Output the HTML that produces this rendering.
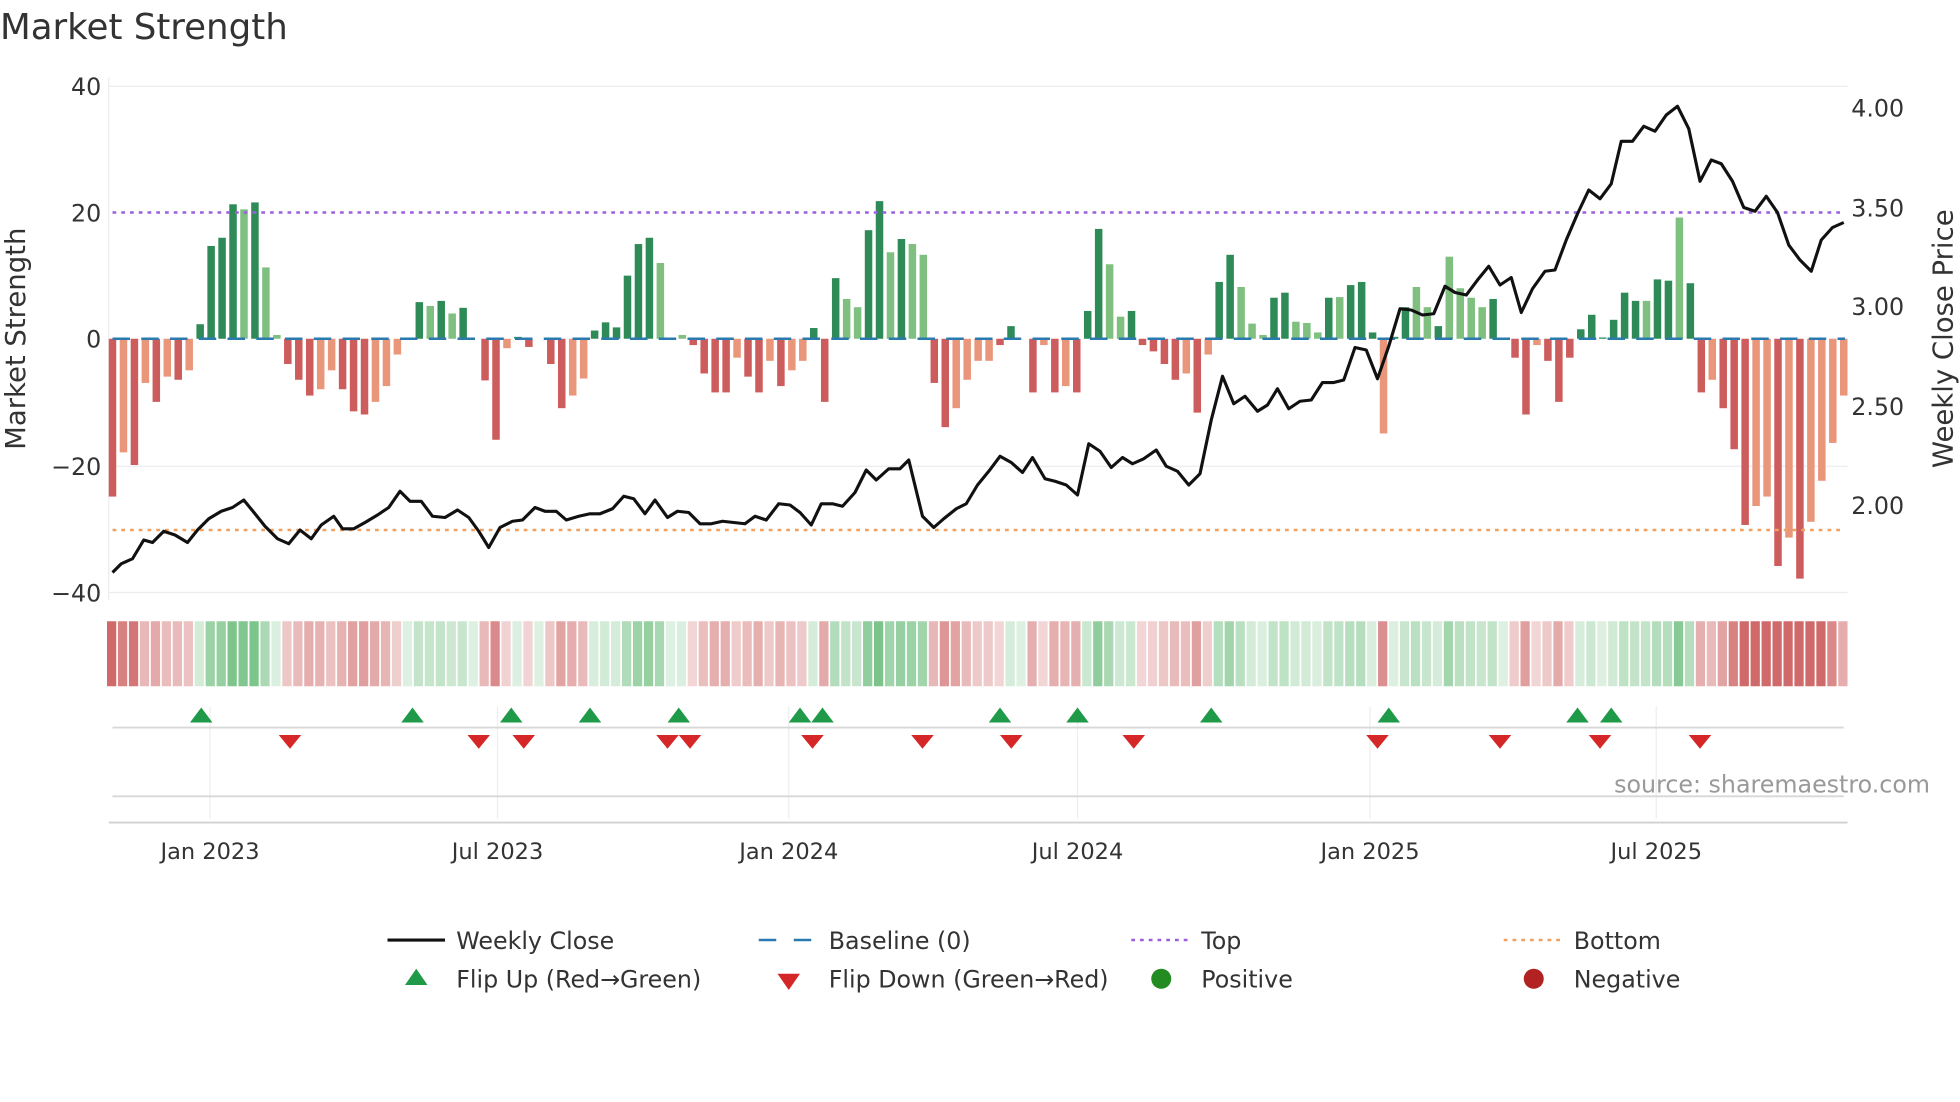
<!DOCTYPE html>
<html><head><meta charset="utf-8"><style>
html,body{margin:0;padding:0;background:#fff;}
svg{display:block;font-family:"DejaVu Sans","Liberation Sans",sans-serif;}
</style></head><body>
<svg id="s" width="1960" height="1102" viewBox="0 0 1568 881.6" xmlns="http://www.w3.org/2000/svg">
<rect width="1568" height="882" fill="#fff"/>
<text x="0" y="31" font-size="28.5" fill="#333">Market Strength</text>
<g stroke="#ececf0" stroke-width="1">
<line x1="87" y1="69" x2="1478" y2="69"/>
<line x1="87" y1="373" x2="1478" y2="373"/>
<line x1="87" y1="474" x2="1478" y2="474"/>
<line x1="87" y1="62" x2="87" y2="480"/>
</g>
<g font-size="19" fill="#333" text-anchor="end">
<text x="81" y="76">40</text><text x="81" y="177">20</text><text x="81" y="278">0</text>
<text x="81" y="380">−20</text><text x="81" y="481">−40</text>
</g>
<g font-size="19" fill="#333">
<text x="1481" y="93">4.00</text><text x="1481" y="173">3.50</text><text x="1481" y="252">3.00</text>
<text x="1481" y="332">2.50</text><text x="1481" y="411">2.00</text>
</g>
<text transform="translate(20,271) rotate(-90)" font-size="22" fill="#333" text-anchor="middle">Market Strength</text>
<text transform="translate(1562,271) rotate(-90)" font-size="22" fill="#333" text-anchor="middle">Weekly Close Price</text>
<g id="bars"></g>
<line x1="90" y1="271" x2="1476" y2="271" stroke="#2a7ab0" stroke-width="2" stroke-dasharray="14,9"/>
<line x1="90" y1="170" x2="1476" y2="170" stroke="#9c5fe0" stroke-width="2" stroke-dasharray="3,4"/>
<line x1="90" y1="424" x2="1476" y2="424" stroke="#f0a060" stroke-width="2" stroke-dasharray="3,4"/>
<polyline id="price" fill="none" stroke="#111" stroke-width="2.5" stroke-linejoin="round"/>
<g id="heat"></g>
<g stroke="#eeeeee" stroke-width="1">
<line x1="168" y1="565" x2="168" y2="655"/><line x1="398" y1="565" x2="398" y2="655"/>
<line x1="631" y1="565" x2="631" y2="655"/><line x1="862" y1="565" x2="862" y2="655"/>
<line x1="1096" y1="565" x2="1096" y2="655"/><line x1="1325" y1="565" x2="1325" y2="655"/>
</g>
<line x1="90" y1="582" x2="1475" y2="582" stroke="#d8d8d8" stroke-width="1.5"/>
<line x1="90" y1="637" x2="1475" y2="637" stroke="#d8d8d8" stroke-width="1.5"/>
<line x1="87" y1="658" x2="1478" y2="658" stroke="#d0d0d0" stroke-width="1.5"/>
<g id="marks"></g>
<text x="1544" y="634" font-size="19" fill="#999" text-anchor="end">source: sharemaestro.com</text>
<g font-size="18" fill="#333" text-anchor="middle">
<text x="168" y="687">Jan 2023</text><text x="398" y="687">Jul 2023</text><text x="631" y="687">Jan 2024</text>
<text x="862" y="687">Jul 2024</text><text x="1096" y="687">Jan 2025</text><text x="1325" y="687">Jul 2025</text>
</g>
<g font-size="19" fill="#333">
<line x1="310" y1="752" x2="356" y2="752" stroke="#111" stroke-width="2.5"/><text x="365" y="759">Weekly Close</text>
<line x1="607" y1="752" x2="651" y2="752" stroke="#2a7ab0" stroke-width="2" stroke-dasharray="14,14"/><text x="663" y="759">Baseline (0)</text>
<line x1="905" y1="752" x2="950" y2="752" stroke="#9c5fe0" stroke-width="2" stroke-dasharray="3,4"/><text x="961" y="759">Top</text>
<line x1="1203" y1="752" x2="1248" y2="752" stroke="#f0a060" stroke-width="2" stroke-dasharray="3,4"/><text x="1259" y="759">Bottom</text>
<polygon points="333,775 342,788 324,788" fill="#1f9a48"/><text x="365" y="790">Flip Up (Red→Green)</text>
<polygon points="622,779 640,779 631,792" fill="#d62728"/><text x="663" y="790">Flip Down (Green→Red)</text>
<circle cx="929" cy="783" r="8" fill="#228b22"/><text x="961" y="790">Positive</text>
<circle cx="1227" cy="783" r="8" fill="#b22222"/><text x="1259" y="790">Negative</text>
</g>
</svg>
<script>
var NS="http://www.w3.org/2000/svg";
var v=[-25,-18,-20,-7,-10,-6,-6.5,-5,2.3,14.7,16,21.3,20.5,21.6,11.3,0.6,-4,-6.5,-9,-8,-5,-8,-11.5,-12,-10,-7.5,-2.5,0,5.8,5.2,6,4,4.9,0,-6.6,-16,-1.5,0.3,-1.3,0,-4,-11,-9,-6.3,1.3,2.6,1.8,10,15,16,12,0,0.6,-1,-5.5,-8.5,-8.5,-3,-6,-8.5,-3.5,-7.5,-5,-3.5,1.7,-10,9.6,6.3,5,17.2,21.8,13.7,15.8,15,13.3,-7,-14,-11,-6.5,-3.5,-3.5,-1,2,0,-8.5,-1,-8.5,-7.5,-8.5,4.4,17.4,11.8,3.5,4.4,-1,-2,-4,-6.5,-5.5,-11.7,-2.5,9,13.3,8.2,2.4,0.6,6.5,7.3,2.7,2.5,1,6.5,6.6,8.5,9,1,-15,0.3,5,8.2,5,2,13,8,6.5,5,6.3,0,-3,-12,-1,-3.5,-10,-3,1.5,3.8,0.2,3,7.3,6,6,9.4,9.2,19.2,8.8,-8.5,-6.5,-11,-17.5,-29.5,-26.5,-25,-36,-31.5,-38,-29,-22.5,-16.5,-9];
var light={};
[1,3,5,7,12,14,15,19,20,24,25,26,29,31,36,42,43,50,52,57,60,62,63,67,68,71,73,74,77,78,79,80,85,87,91,92,98,100,103,104,105,108,109,110,112,116,119,120,121,122,125,127,130,140,143,147,148,149,150,151,152,153,154,155].forEach(function(i){light[i]=1});
var N=v.length,x0=90,dx=(1475-90)/(N-1),bars=document.getElementById("bars"),heat=document.getElementById("heat");
function near(x){return Math.round((x-x0)/dx);}
[1102,1120,1129,1155,1191,1360,1377,1386,1395,1422,1440].forEach(function(x){delete light[near(x)];});
[1137,1146,1164,1173,1182,1369,1404,1413,1431,1449,1457,1466,1475].forEach(function(x){light[near(x)]=1;});
for(var i=0;i<N;i++){
 var x=x0+i*dx,val=v[i],h=Math.abs(val)*5.05;
 if(h>0.3){var r=document.createElementNS(NS,"rect");
 r.setAttribute("x",x-3);r.setAttribute("width",6);
 r.setAttribute("y",val>0?271-h:271);r.setAttribute("height",h);
 var c=val>0?(light[i]?"#7fbf7f":"#2e8b57"):(light[i]?"#e9967a":"#cd5c5c");
 r.setAttribute("fill",c);bars.appendChild(r);}
 var a=Math.min(1,0.25+Math.abs(val)/30);
 var hc=document.createElementNS(NS,"rect");
 hc.setAttribute("x",x-4.4);hc.setAttribute("width",7.4);hc.setAttribute("y",497);hc.setAttribute("height",52);
 hc.setAttribute("fill",val>=0?"rgb(76,175,96)":"rgb(200,80,80)");hc.setAttribute("fill-opacity",val>=0?a*0.75:a*0.85);
 heat.appendChild(hc);
}
var p=[[90,458],[97,451],[106,447],[115,432],[122,434],[131,425],[140,428],[150,434],[158,424],[167,415],[177,409],[186,406],[195,400],[204,411],[212,421],[222,431],[231,435],[240,424],[249,431],[257,420],[267,413],[274,423],[283,423],[292,418],[302,412],[311,406],[320,393],[328,401],[337,401],[346,413],[356,414],[366,408],[375,414],[383,425],[391,438],[400,422],[410,417],[418,416],[428,406],[436,409],[445,409],[453,416],[463,413],[472,411],[480,411],[490,407],[499,397],[507,399],[516,411],[524,400],[534,414],[542,409],[551,410],[560,419],[569,419],[578,417],[587,418],[596,419],[604,413],[613,416],[623,403],[632,404],[640,410],[649,420],[657,403],[666,403],[674,405],[684,394],[693,376],[701,384],[711,375],[720,375],[727,368],[738,413],[747,422],[755,415],[765,407],[773,403],[782,388],[791,377],[800,365],[809,370],[818,378],[826,366],[836,383],[844,385],[853,388],[862,396],[871,355],[880,361],[889,374],[898,366],[906,371],[915,367],[925,360],[933,373],[942,377],[951,388],[960,379],[969,336],[978,301],[987,323],[996,317],[1006,329],[1014,324],[1022,311],[1031,327],[1040,321],[1049,320],[1058,306],[1067,306],[1075,304],[1084,278],[1093,280],[1102,303],[1111,277],[1120,247],[1129,248],[1138,252],[1147,251],[1156,229],[1164,234],[1173,236],[1182,224],[1191,213],[1200,228],[1209,222],[1217,250],[1226,231],[1236,217],[1244,216],[1253,192],[1262,171],[1271,152],[1280,159],[1289,147],[1297,113],[1306,113],[1315,101],[1324,105],[1333,92],[1342,85],[1351,103],[1360,145],[1369,128],[1377,131],[1386,145],[1395,166],[1404,169],[1413,157],[1422,170],[1431,196],[1440,208],[1449,217],[1457,192],[1466,182],[1475,178]];
document.getElementById("price").setAttribute("points",p.map(function(q){return q.join(",")}).join(" "));
var m=document.getElementById("marks");
[161,330,409,472,543,640,658,800,862,969,1111,1262,1289].forEach(function(x){var t=document.createElementNS(NS,"polygon");t.setAttribute("points",(x)+",566 "+(x+9)+",578 "+(x-9)+",578");t.setAttribute("fill","#1f9a48");m.appendChild(t);});
[232,383,419,534,552,650,738,809,907,1102,1200,1280,1360].forEach(function(x){var t=document.createElementNS(NS,"polygon");t.setAttribute("points",(x-9)+",588 "+(x+9)+",588 "+x+",599");t.setAttribute("fill","#d62728");m.appendChild(t);});
</script>
</body></html>
